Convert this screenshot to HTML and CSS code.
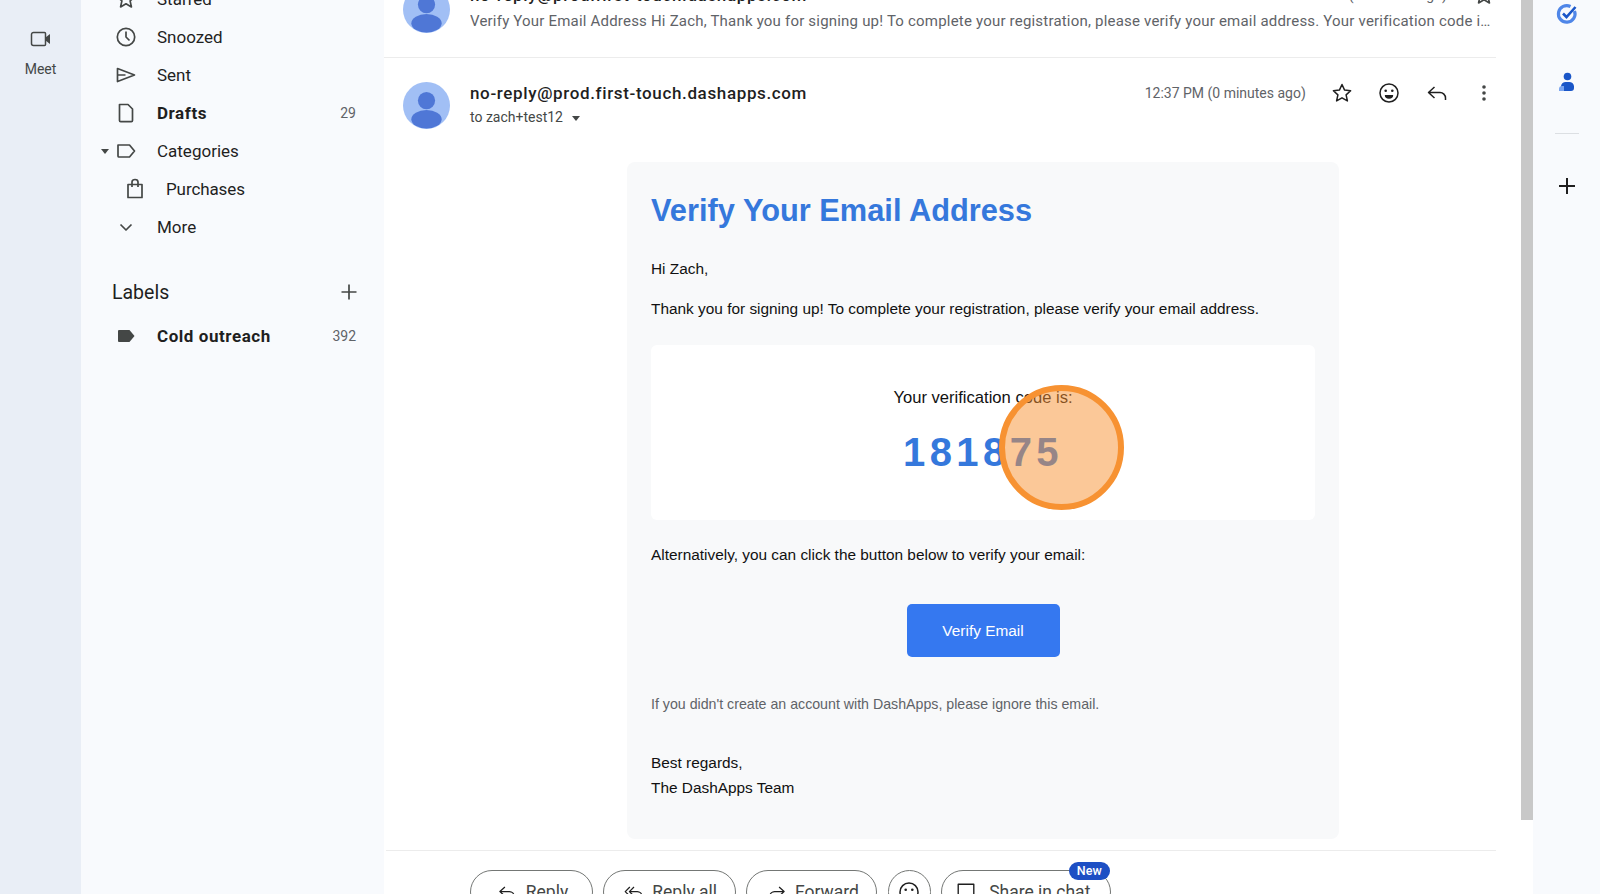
FILE: index.html
```html
<!DOCTYPE html>
<html lang="en">
  <head>
    <meta charset="UTF-8" />
    <title>Gmail</title>
    <link rel="stylesheet" href="styles.css">
  </head>

  <body>
    <nav class="rail">
      <svg class="rail-icon" viewBox="0 0 24 24" width="24" height="24">
        <path d="M4.500 5.500h11a1 1 0 0 1 1 1v11a1 1 0 0 1-1 1h-11a2 2 0 0 1-2-2v-9a2 2 0 0 1 2-2z" fill="none" stroke="#444746" stroke-width="1.500"/>
        <path d="M16.500 10.500l4.500-3.500v10l-4.500-3.500z" fill="#444746"/>
      </svg>
      <span>Meet</span>
    </nav>

    <aside class="sidebar">
      <ul class="menu">
        <li>
          <svg viewBox="0 0 24 24" width="24" height="24"><path class="line" d="M12 3.500l2.600 5.600 6 .7-4.500 4.100 1.300 6-5.400-3.100-5.400 3.100 1.300-6-4.500-4.100 6-.7z"/></svg>
          <span>Starred</span>
        </li>
        <li>
          <svg viewBox="0 0 24 24" width="24" height="24"><circle class="line" cx="12" cy="12" r="8.700"/><path class="line" d="M12 6.500V12l3.500 3.500"/></svg>
          <span>Snoozed</span>
        </li>
        <li>
          <svg viewBox="0 0 24 24" width="24" height="24"><path class="line" d="M3.500 5.500L20.500 12 3.500 18.500zM3.500 12h8"/></svg>
          <span>Sent</span>
        </li>
        <li class="bold">
          <svg viewBox="0 0 24 24" width="24" height="24"><path class="line" d="M5.500 3.500h8.500l4.500 4.500v11.500a1.200 1.200 0 0 1-1.200 1.200H6.700a1.200 1.200 0 0 1-1.200-1.200z"/></svg>
          <span>Drafts</span>
          <em>29</em>
        </li>
        <li class="caret-row">
          <i class="caret"></i>
          <svg viewBox="0 0 24 24" width="24" height="24"><path class="line" d="M4 6h11.500l5 6-5 6H4.700a.9.900 0 0 1-.7-.9z"/></svg>
          <span>Categories</span>
        </li>
        <li class="sub">
          <svg viewBox="0 0 24 24" width="24" height="24"><path class="line" d="M5 7.500h14v13H5zM9 10V5a3 2.500 0 0 1 6 0v5"/></svg>
          <span>Purchases</span>
        </li>
        <li>
          <svg viewBox="0 0 24 24" width="24" height="24"><path class="line" d="M6.500 9.500l5.500 5.500 5.500-5.500"/></svg>
          <span>More</span>
        </li>
      </ul>

      <div class="labels-head">
        <h2>Labels</h2>
        <svg viewBox="0 0 24 24" width="24" height="24"><path class="line" d="M12 4.500v15M4.500 12h15"/></svg>
      </div>

      <ul class="menu">
        <li class="bold">
          <svg viewBox="0 0 24 24" width="24" height="24"><path d="M4 7a1 1 0 0 1 1-1h10.500l5 6-5 6H5a1 1 0 0 1-1-1z" fill="#444746"/></svg>
          <span>Cold outreach</span>
          <em>392</em>
        </li>
      </ul>
    </aside>

    <main class="thread">
      <section class="msg msg-collapsed">
        <svg class="avatar" viewBox="0 0 48 48" width="47" height="47"><circle cx="24" cy="24" r="24" fill="#a1bff5"/><circle cx="24" cy="19" r="8.800" fill="#4f77d6"/><ellipse cx="24" cy="38" rx="15.500" ry="9.500" fill="#4f77d6"/></svg>
        <div class="msg-body">
          <div class="msg-top">
            <strong class="sender">no-reply@prod.first-touch.dashapps.com</strong>
            <time>12:34 PM (3 minutes ago)</time>
            <svg class="star-small" viewBox="0 0 24 24" width="24" height="24"><path class="line" d="M12 3.500l2.600 5.600 6 .7-4.500 4.100 1.300 6-5.400-3.100-5.400 3.100 1.300-6-4.500-4.100 6-.7z"/></svg>
          </div>
          <p class="snippet">Verify Your Email Address Hi Zach, Thank you for signing up! To complete your registration, please verify your email address. Your verification code is: 181875</p>
        </div>
      </section>

      <section class="msg msg-open">
        <svg class="avatar" viewBox="0 0 48 48" width="47" height="47"><circle cx="24" cy="24" r="24" fill="#a1bff5"/><circle cx="24" cy="19" r="8.800" fill="#4f77d6"/><ellipse cx="24" cy="38" rx="15.500" ry="9.500" fill="#4f77d6"/></svg>
        <div class="msg-body">
          <div class="msg-top">
            <strong class="sender">no-reply@prod.first-touch.dashapps.com</strong>
            <time>12:37 PM (0 minutes ago)</time>
            <div class="msg-actions">
              <svg viewBox="0 0 24 24" width="24" height="24"><path class="thin" d="M12 3.500l2.600 5.600 6 .7-4.500 4.100 1.300 6-5.400-3.100-5.400 3.100 1.300-6-4.500-4.100 6-.7z"/></svg>
              <svg viewBox="0 0 24 24" width="24" height="24"><circle class="thin" cx="12" cy="12" r="9"/><circle cx="8.700" cy="9.700" r="1.300" fill="#1f1f1f"/><circle cx="15.300" cy="9.700" r="1.300" fill="#1f1f1f"/><path d="M7.800 14h8.400a4.200 3.800 0 0 1-8.400 0z" fill="#1f1f1f"/></svg>
              <svg viewBox="0 0 24 24" width="24" height="24"><path class="thin" d="M9.500 6l-6 5.500 6 5.500M3.500 11.500H15a5.500 5.500 0 0 1 5.500 5.500v2"/></svg>
              <svg viewBox="0 0 24 24" width="24" height="24"><circle cx="12" cy="6" r="1.800" fill="#444746"/><circle cx="12" cy="12" r="1.800" fill="#444746"/><circle cx="12" cy="18" r="1.800" fill="#444746"/></svg>
            </div>
          </div>
          <div class="recipient">to zach+test12 <i class="caret"></i></div>
        </div>
      </section>

      <article class="email">
        <h1>Verify Your Email Address</h1>
        <p>Hi Zach,</p>
        <p>Thank you for signing up! To complete your registration, please verify your email address.</p>
        <div class="code-box">
          <p>Your verification code is:</p>
          <div class="code">181875</div>
          <div class="click-mark"></div>
        </div>
        <p>Alternatively, you can click the button below to verify your email:</p>
        <div class="btn-row"><a class="verify-btn">Verify Email</a></div>
        <p class="muted">If you didn't create an account with DashApps, please ignore this email.</p>
        <p class="signoff">Best regards,<br>The DashApps Team</p>
      </article>

      <div class="reply-bar">
        <button class="btn-reply">
          <svg viewBox="0 0 24 24" width="20" height="20"><path class="thin" d="M9.500 6l-6 5.500 6 5.500M3.500 11.500H15a5.500 5.500 0 0 1 5.500 5.500v2"/></svg>
          Reply
        </button>
        <button class="btn-all">
          <svg viewBox="0 0 24 24" width="20" height="20"><path class="thin" d="M7 6l-5.500 5.500L7 17M12 6l-5.500 5.500L12 17M6.500 11.500H16a5.500 5.500 0 0 1 5.500 5.500v2"/></svg>
          Reply all
        </button>
        <button class="btn-forward">
          <svg viewBox="0 0 24 24" width="20" height="20"><path class="thin" d="M14.500 6l6 5.500-6 5.500M20.500 11.500H9A5.500 5.500 0 0 0 3.500 17v2"/></svg>
          Forward
        </button>
        <button class="round">
          <svg viewBox="0 0 24 24" width="24" height="24"><circle class="thin" cx="12" cy="12" r="9"/><circle cx="8.700" cy="9.700" r="1.300" fill="#1f1f1f"/><circle cx="15.300" cy="9.700" r="1.300" fill="#1f1f1f"/></svg>
        </button>
        <button class="btn-share">
          <svg viewBox="0 0 24 24" width="22" height="22"><path class="thin" d="M3.500 3.500h17v16h-17z"/></svg>
          Share in chat
          <b class="badge">New</b>
        </button>
      </div>
    </main>

    <div class="scrollbar"><div class="thumb"></div></div>

    <aside class="apps">
      <svg viewBox="0 0 24 24" width="24" height="24"><path d="M19.500 9A8.300 8.300 0 1 1 15.500 4.500" fill="none" stroke="#4f86e8" stroke-width="3.200"/><path d="M8 11.500l3.500 3.500 9-10" fill="none" stroke="#1a56c8" stroke-width="2.600"/></svg>
      <svg class="app-contact" viewBox="0 0 24 24" width="24" height="24"><circle cx="12.500" cy="6.500" r="3.800" fill="#1a56c8"/><path d="M6 19v-3a5 5 0 0 1 5-4h3a5 5 0 0 1 5 4v2a3 3 0 0 1-3 3H6z" fill="#1a56c8"/><path d="M4 21v-2a3 3 0 0 1 3-3h2v5z" fill="#7aa5f0"/></svg>
      <hr>
      <svg viewBox="0 0 24 24" width="24" height="24"><path d="M12 4v16M4 12h16" fill="none" stroke="#1f1f1f" stroke-width="2"/></svg>
    </aside>
  </body>
</html>
```

FILE: styles.css
```css
* {
  box-sizing: border-box;
}

html,
body {
  height: 894px;
  margin: 0;
  overflow: hidden;
}

body {
  display: flex;
  background-color: white;
  font-family: Roboto, sans-serif;
  color: #1f1f1f;
}

ul {
  list-style-type: none;
  margin: 0;
  padding: 0;
}

.line {
  fill: none;
  stroke: #444746;
  stroke-width: 1.700;
  stroke-linejoin: round;
}

.thin {
  fill: none;
  stroke: #1f1f1f;
  stroke-width: 1.500;
  stroke-linejoin: round;
}

.caret {
  display: inline-block;
  border-left: 4.500px solid transparent;
  border-right: 4.500px solid transparent;
  border-top: 5px solid #444746;
}

/* left rail */
.rail {
  width: 81px;
  flex-shrink: 0;
  background-color: #e9eef6;
  display: flex;
  flex-direction: column;
  align-items: center;
  padding-top: 27px;
  font-size: 14px;
  color: #444746;
}

.rail span {
  margin-top: 10px;
}

/* mail sidebar */
.sidebar {
  width: 303px;
  flex-shrink: 0;
  background-color: #f8fafd;
  padding-right: 28px;
}

.menu {
  padding-left: 33px;
}

.sidebar > .menu:first-child {
  margin-top: -20px;
}

.menu li {
  height: 38px;
  display: flex;
  align-items: center;
  font-size: 17px;
  position: relative;
}

.menu svg {
  flex-shrink: 0;
  margin-right: 19px;
}

.menu span {
  flex: 1;
}

.menu em {
  font-style: normal;
  font-size: 14px;
  color: #5f6368;
}

.menu .bold {
  font-weight: 700;
  letter-spacing: 0.550px;
}

.menu .bold em {
  font-weight: 400;
  letter-spacing: 0;
}

.menu .caret-row .caret {
  position: absolute;
  left: -13px;
  top: 17px;
}

.menu .sub {
  padding-left: 9px;
  letter-spacing: -0.100px;
}

.labels-head {
  display: flex;
  align-items: center;
  justify-content: space-between;
  margin-top: 31px;
  margin-right: -4.500px;
  padding-left: 31px;
  height: 30px;
}

.labels-head h2 {
  margin: 0;
  font-size: 19.500px;
  font-weight: 400;
}

.labels-head + .menu {
  margin-top: 10px;
}

/* conversation */
.thread {
  width: 1137px;
  flex-shrink: 0;
  margin-top: -19px;
}

.msg {
  display: flex;
  margin-right: 25px;
}

.msg-collapsed {
  height: 77px;
  padding: 5px 0 0 19px;
  border-bottom: 1px solid #ececec;
}

.msg-open {
  padding: 23px 0 0 19px;
}

.msg-open .avatar {
  margin-top: 1px;
}

.avatar {
  flex-shrink: 0;
  margin-right: 20px;
}

.msg-body {
  flex: 1;
  min-width: 0;
}

.msg-top {
  display: flex;
  align-items: center;
  height: 24px;
}

.msg-collapsed .msg-top {
  margin-top: -3px;
}

.sender {
  flex: 1;
  font-size: 17px;
  font-weight: 500;
  letter-spacing: 0.640px;
}

time {
  font-size: 14px;
  color: #5f6368;
}

.star-small {
  margin-left: 25px;
}

.snippet {
  margin: 5px 0 0;
  font-size: 15px;
  letter-spacing: 0.200px;
  color: #5f6368;
  white-space: nowrap;
  overflow: hidden;
  text-overflow: ellipsis;
}

.msg-actions {
  display: flex;
  gap: 23.400px;
  margin-left: 24px;
}

.recipient {
  font-size: 14px;
  color: #444746;
  margin-top: 4px;
}

.recipient .caret {
  margin-left: 6px;
  vertical-align: middle;
}

/* the email itself */
.email {
  width: 712px;
  height: 677px;
  margin: 33px 0 0 243px;
  padding: 24px;
  background-color: #f8f9fa;
  border-radius: 8px;
  font-family: "Liberation Sans", sans-serif;
  font-size: 15.400px;
  color: #111;
}

.email h1 {
  margin: 7px 0 0;
  font-size: 30.800px;
  font-weight: 700;
  color: #3578dc;
}

.email p {
  margin: 0;
}

.email > p {
  margin-top: 22px;
}

.email h1 + p {
  margin-top: 30.500px;
}

.code-box {
  position: relative;
  height: 175px;
  margin: 27px 0 26px;
  padding-top: 43px;
  background-color: white;
  border-radius: 6px;
  text-align: center;
  font-size: 16.600px;
}

.code {
  margin-top: 22px;
  font-size: 40px;
  font-weight: 700;
  letter-spacing: 4.400px;
  color: #3578dc;
}

/* orange click marker from the screen recorder */
.click-mark {
  position: absolute;
  left: 348px;
  top: 40px;
  width: 125px;
  height: 125px;
  border: 6px solid #f79232;
  border-radius: 50%;
  background-color: rgba(247, 146, 50, 0.500);
}

.email > .code-box + p {
  margin-top: 0;
}

.btn-row {
  margin-top: 40px;
  text-align: center;
}

.verify-btn {
  display: inline-block;
  width: 153px;
  height: 53px;
  line-height: 53px;
  background-color: #3578f0;
  border-radius: 5px;
  color: white;
}

.email > .muted {
  margin-top: 39px;
  font-size: 14.200px;
  color: #5f6368;
}

.email > .signoff {
  margin-top: 38px;
  line-height: 25px;
}

.reply-bar {
  display: flex;
  gap: 10.200px;
  margin: 11px 25px 0 2px;
  padding: 19px 0 0 84px;
  border-top: 1px solid #ececec;
}

.reply-bar button {
  position: relative;
  flex-shrink: 0;
  display: flex;
  align-items: center;
  justify-content: center;
  gap: 8px;
  height: 44px;
  padding: 0 0 0 2px;
  background-color: white;
  border: 1px solid #747775;
  border-radius: 22px;
  font-family: Roboto, sans-serif;
  font-size: 17.500px;
  color: #444746;
}

.reply-bar .btn-reply {
  width: 123px;
  gap: 9px;
}

.reply-bar .btn-all {
  width: 133px;
}

.reply-bar .btn-forward {
  width: 131px;
}

.reply-bar .round {
  width: 43px;
  padding: 0;
}

.reply-bar .btn-share {
  width: 170px;
  gap: 12px;
  padding: 0 8px 0 2px;
}

.badge {
  position: absolute;
  right: 0;
  top: -9px;
  width: 41px;
  height: 18px;
  line-height: 18px;
  background-color: #1d4fc4;
  border-radius: 9px;
  font-size: 12.500px;
  font-weight: 500;
  color: white;
  text-align: center;
}

/* page scrollbar */
.scrollbar {
  width: 12px;
  flex-shrink: 0;
}

.thumb {
  height: 820px;
  background-color: #c8c8c8;
}

/* right app strip */
.apps {
  flex: 1;
  background-color: #f8fafd;
  display: flex;
  flex-direction: column;
  align-items: center;
  padding-top: 2px;
}

.app-contact {
  margin-top: 44px;
}

.apps hr {
  width: 24px;
  height: 1px;
  margin: 39px 0 40px;
  border: 0;
  background-color: #dcdfe3;
}
```
